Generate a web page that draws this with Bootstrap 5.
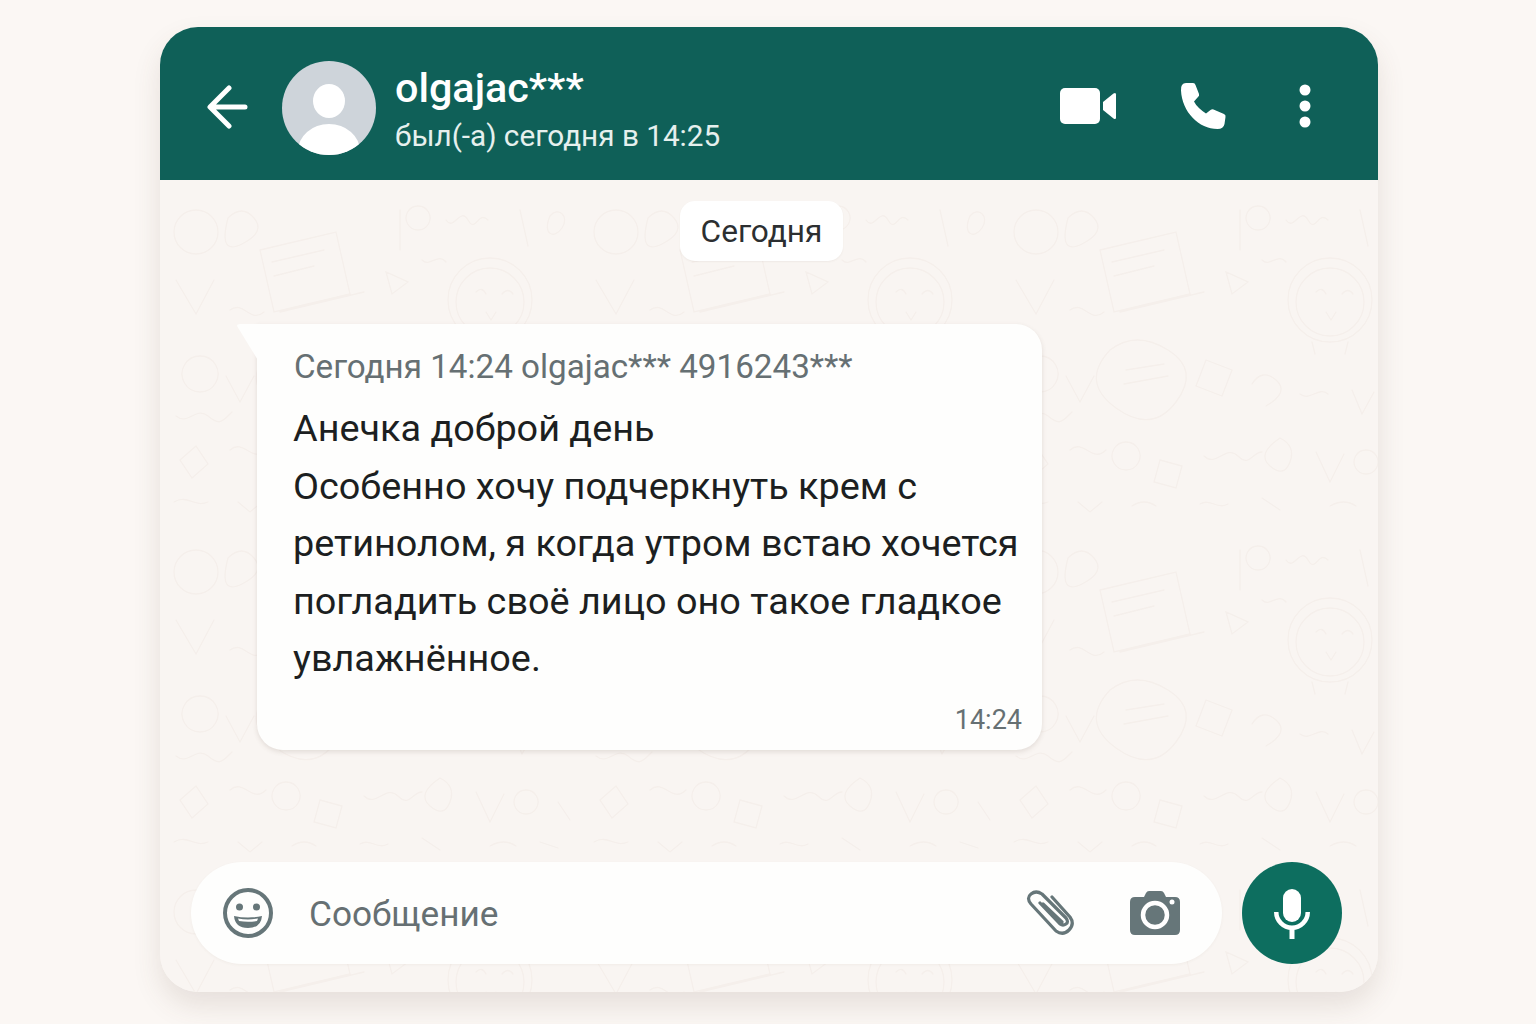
<!DOCTYPE html>
<html lang="ru">
<head>
<meta charset="utf-8">
<title>Чат</title>
<link href="https://cdn.jsdelivr.net/npm/bootstrap@5.3.0/dist/css/bootstrap.min.css" rel="stylesheet">
<style>
html,body{height:100%;}
body{background:#fbf7f4;font-family:Roboto,"Liberation Sans",sans-serif;overflow:hidden;}
.stage{height:1024px;padding:27px 158px 32px 160px;}
.chat-card{height:965px;border:0;border-radius:38px;background:#f9f5f2;box-shadow:0 14px 28px rgba(90,70,55,.13);overflow:hidden;}
.chat-head{height:153px;background:#0f6058;color:#fff;padding:8px 67px 0 46px;flex:none;}
.back-ico{width:44px;height:44px;margin-right:32px;margin-top:-2px;}
.ava{width:94px;height:94px;margin-right:19px;}
.who-block{margin-top:11px;}
.who-name{font-size:41.3px;font-weight:500;line-height:44px;margin-top:-6px;}
.who-seen{font-size:29.7px;line-height:36px;margin-top:8px;color:#e6f0ee;}
.ico-video{width:58px;height:38px;margin-right:63px;margin-top:-4px;}
.ico-phone{width:48px;height:48px;margin-right:71px;margin-top:-4px;}
.ico-dots{width:12px;height:44px;margin-top:-4px;}
.chat-body{flex:1;min-height:0;padding:21px 36px 28px 31px;background-color:#f9f5f2;
background-image:url("data:image/svg+xml,%3Csvg xmlns='http://www.w3.org/2000/svg' width='420' height='340' fill='none' stroke='%23f5efeb' stroke-width='1.300' stroke-linecap='round'%3E%3Ccircle cx='330' cy='120' r='42'/%3E%3Ccircle cx='330' cy='122' r='34'/%3E%3Cpath d='M316 112q6-6 10 2M342 114q6-7 11 0M326 132l5 8 5-8M312 162l3 12M348 162l-3 12'/%3E%3Cpath d='M100 70l76-18 14 62-76 18zM112 82l52-12M114 96l40-10M120 132l84-20'/%3E%3Ccircle cx='36' cy='52' r='22'/%3E%3Cpath d='M68 38q14-14 26 0t-12 26-14-26M240 30v40M258 26a12 12 0 1 0 .1 0M286 40c8 12 14-14 22 0s10-10 20 0M360 30l8 36M390 36c8-10 20 0 12 12s-20 6-12-12M16 100l20 34 18-34M70 130c14-10 20 14 34 2M226 92l6 22 16-12zM262 80c8 8 16-8 24 2'/%3E%3Cpath d='M110 170q26-20 58 0t8 52-60 6-6-58zM126 190l38-6M124 204l44-8M40 176a18 18 0 1 0 .1 0M66 196l14 26 14-26M16 236c12 10 20-10 32 0s14 6 24-4'/%3E%3Cpath d='M206 180l26 10-10 26-26-10zM252 204q10-16 24-4t-10 26M300 214c10 8 18-8 28 0M352 210l10 24 12-22M398 190a10 10 0 1 0 .1 0M20 280l16-14 12 18-16 14zM70 270c14-12 22 14 36 0M126 262a14 14 0 1 0 .1 0M160 280l22 6-6 22-22-6zM204 276c12 12 22-12 34 0s14-4 24-4M280 258q16 8 10 24t-20 4 10-28M316 272l14 30 14-28M366 270a12 12 0 1 0 .1 0M398 282l12 18M14 322c14-8 20 6 34 0M78 322l12 10 12-10M132 326q12-8 24 0M200 324c10-6 18 6 28 0M262 318l18 12M330 326q14-8 26 0M380 322l18 6'/%3E%3C/svg%3E");}
.date-chip{width:163px;height:60px;background:#fff;border-radius:15px;font-size:31.6px;color:#2c2f31;margin-left:489px;padding-top:1px;box-shadow:0 1px 2px rgba(90,70,55,.06);}
.bubble-wrap{margin:63px 0 0 66px;}
.bubble{width:785px;height:426px;background:#fefefd;border-radius:0 26px 26px 26px;padding:20px 20px 12px 37px;box-shadow:0 2px 5px rgba(90,70,55,.14);}
.bubble-tail{position:absolute;left:-20px;top:0;width:22px;height:38px;}
.bubble-meta{font-size:33.2px;line-height:46px;color:#667073;white-space:nowrap;}
.bubble-text{font-size:37.8px;line-height:57.5px;color:#1c1f21;margin-top:10px;white-space:nowrap;margin-left:-1px;}
.bubble-time{font-size:27px;line-height:32px;color:#667073;margin-top:16px;}
.composer-row{margin-top:auto;gap:20px;}
.composer{width:1031px;height:102px;background:#fefefd;border-radius:51px;padding:0 41px 0 32px;box-shadow:0 1px 3px rgba(90,70,55,.05);}
.ico-smile{width:50px;height:50px;margin-right:37px;}
.composer-ph{font-size:35.2px;color:#667073;margin-top:2px;margin-left:-1px;}
.ico-clip{width:50px;height:46px;margin-right:53px;}
.ico-cam{width:52px;height:48px;}
.mic-btn{width:100px;height:102px;background:#0d6e5f;border:0;flex:none;}
.mic-btn svg{width:40px;height:56px;}
</style>
</head>
<body>
<div class="stage">
<div class="card chat-card d-flex flex-column">
  <header class="chat-head d-flex align-items-center">
    <svg class="back-ico" viewBox="0 0 44 44" fill="none" stroke="#fff" stroke-width="5" stroke-linecap="round" stroke-linejoin="round"><path d="M5 22h34M23 3 4 22l19 19"/></svg>
    <svg class="ava" viewBox="0 0 94 94"><defs><clipPath id="avaClip"><circle cx="47" cy="47" r="47"/></clipPath></defs><circle cx="47" cy="47" r="47" fill="#ced4da"/><g clip-path="url(#avaClip)" fill="#fff"><ellipse cx="47" cy="40" rx="16" ry="17"/><ellipse cx="47" cy="90" rx="31" ry="27"/></g></svg>
    <div class="flex-grow-1 who-block">
      <div class="who-name">olgajac***</div>
      <div class="who-seen">был(-а) сегодня в 14:25</div>
    </div>
    <svg class="ico-video" viewBox="0 0 58 38" fill="#fff"><rect x="1" y="1" width="40" height="36" rx="5"/><path d="M44 15 54.500 6.500q2.500-1.500 2.500 1V30.500q0 2.500-2.500 1L44 23z"/></svg>
    <svg class="ico-phone" viewBox="0 0 48 48" fill="#fff"><path d="M1 8.500Q.5 1 6 1h7q2 0 2.500 2l3.500 9q.5 2-1 3l-4 4.500q3 6 12 12l4.500-3.500q1.500-1 3-.5l10.500 4.500q2 .8 1.500 3l-1 7q-1 5-7 5C19 47 2 30 1 8.500z"/></svg>
    <svg class="ico-dots" viewBox="0 0 12 44" fill="#fff"><circle cx="6" cy="6" r="5.500"/><circle cx="6" cy="22" r="5.500"/><circle cx="6" cy="38" r="5.500"/></svg>
  </header>
  <main class="chat-body d-flex flex-column">
    <div class="date-chip d-flex align-items-center justify-content-center">Сегодня</div>
    <div class="bubble-wrap">
      <div class="bubble position-relative">
        <svg class="bubble-tail" viewBox="0 0 22 38"><path d="M0 2Q0 0 3 0H22V38z" fill="#fefefd"/></svg>
        <div class="bubble-meta">Сегодня 14:24 olgajac*** 4916243***</div>
        <div class="bubble-text">Анечка доброй день<br>Особенно хочу подчеркнуть крем с<br>ретинолом, я когда утром встаю хочется<br>погладить своё лицо оно такое гладкое<br>увлажнённое.</div>
        <div class="bubble-time text-end">14:24</div>
      </div>
    </div>
    <div class="composer-row d-flex">
      <div class="composer d-flex align-items-center">
        <svg class="ico-smile" viewBox="0 0 50 50"><circle cx="25" cy="25" r="23" fill="none" stroke="#667679" stroke-width="4"/><circle cx="16.500" cy="19" r="3.500" fill="#667679"/><circle cx="33.500" cy="19" r="3.500" fill="#667679"/><path d="M11 28q14 3 28 0q-1 12-14 12T11 28z" fill="#667679"/><path d="M15 30.500q10 1.800 20 0l-1 2.500q-9 1.500-18 0z" fill="#fff"/></svg>
        <div class="composer-ph flex-grow-1">Сообщение</div>
        <svg class="ico-clip" viewBox="0 0 50 46" fill="none" stroke="#667679" stroke-width="3.200" stroke-linecap="round" stroke-linejoin="round"><path d="M17 14l19 18M26 7l18 20q5 7-1 13t-13 1L5 14Q0 8 5 4t11 0l24 24q3 4 0 6t-6 0L14 13"/></svg>
        <svg class="ico-cam" viewBox="0 0 52 48"><path d="M6 8h9l2-4q1-2 3-2h12q2 0 3 2l2 4h9q5 0 5 5v28q0 5-5 5H6q-5 0-5-5V13q0-5 5-5z" fill="#667679"/><circle cx="26" cy="26" r="12" fill="none" stroke="#fff" stroke-width="4.500"/><circle cx="43" cy="13" r="2.500" fill="#fff"/></svg>
      </div>
      <button class="mic-btn btn rounded-circle d-flex align-items-center justify-content-center p-0" type="button" aria-label="Микрофон">
        <svg viewBox="0 0 40 56" fill="#fff"><rect x="11" y="4" width="18" height="33" rx="9"/><path d="M4.250 27a15.750 15.750 0 0 0 31.500 0" fill="none" stroke="#fff" stroke-width="4.500"/><rect x="17.500" y="43" width="5" height="11"/></svg>
      </button>
    </div>
  </main>
</div>
</div>
<script src="https://cdn.jsdelivr.net/npm/bootstrap@5.3.0/dist/js/bootstrap.bundle.min.js"></script>
</body>
</html>
